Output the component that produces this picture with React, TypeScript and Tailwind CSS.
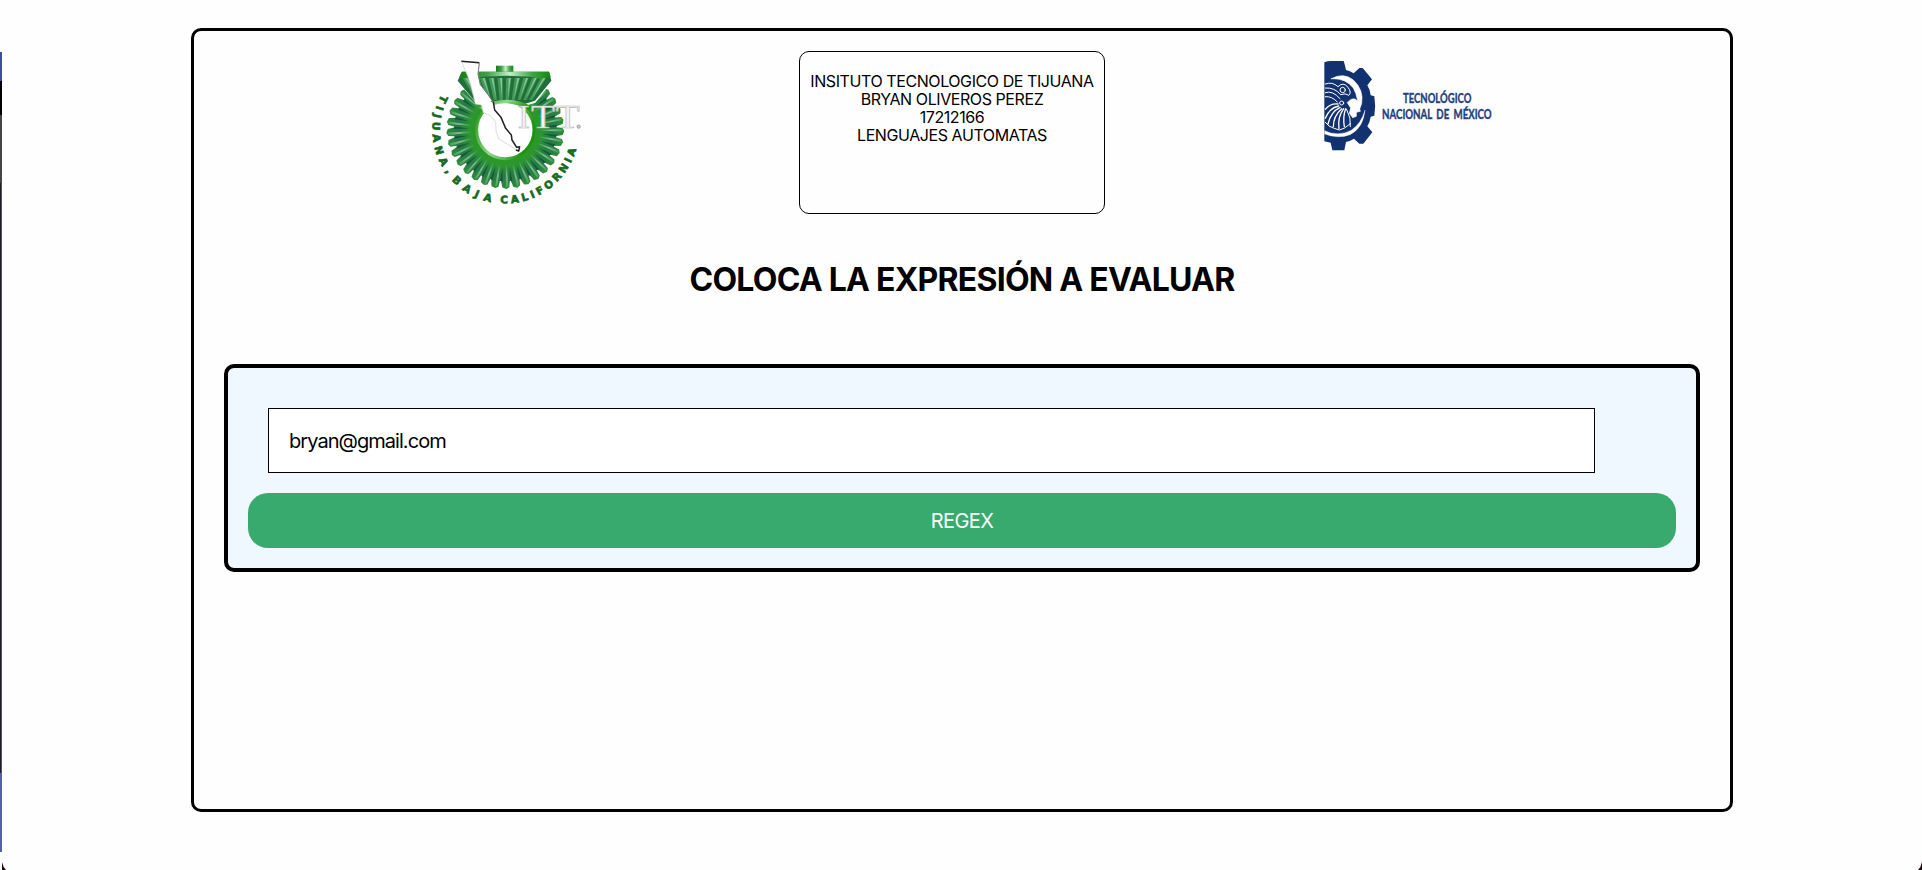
import React from "react";

const GEAR_CX = 256;
const GEAR_CY = 240;

function polar(r: number, deg: number) {
  const a = (deg * Math.PI) / 180;
  return `${(GEAR_CX + r * Math.cos(a)).toFixed(1)},${(GEAR_CY + r * Math.sin(a)).toFixed(1)}`;
}

function arc(r: number, from: number, to: number) {
  return `M${polar(r, from)} A${r},${r} 0 0 0 ${polar(r, to)}`;
}

const TEETH = Array.from({ length: 25 }, (_, i) => -42 + i * 11);
const BEVEL = [-118, -92, -66, -40, -14, 12, 38, 64, 90, 116];

function TijuanaLogo() {
  return (
    <svg className="block h-[160px] w-[170px]" viewBox="0 0 510 480" aria-hidden="true">
      <defs>
        <radialGradient id="body" gradientUnits="userSpaceOnUse" cx={GEAR_CX} cy={GEAR_CY} r="174">
          <stop offset="0.5" stopColor="#2a9a1c" />
          <stop offset="0.62" stopColor="#2c9436" />
          <stop offset="0.8" stopColor="#26794a" />
          <stop offset="1" stopColor="#2f8a3c" />
        </radialGradient>
        <radialGradient id="shine" gradientUnits="userSpaceOnUse" cx={GEAR_CX} cy={GEAR_CY} r="174">
          <stop offset="0.58" stopColor="#2e9a1f" />
          <stop offset="0.8" stopColor="#7dbd8c" />
          <stop offset="1" stopColor="#3f9c50" />
        </radialGradient>
        <linearGradient id="plate" x1="0" x2="1">
          <stop offset="0" stopColor="#15800f" />
          <stop offset="0.3" stopColor="#3f9e4a" />
          <stop offset="0.55" stopColor="#c4eec8" />
          <stop offset="0.8" stopColor="#3fa348" />
          <stop offset="1" stopColor="#128a0a" />
        </linearGradient>
        <linearGradient id="ring" x1="0" x2="1" y2="0.4">
          <stop offset="0" stopColor="#1f9310" />
          <stop offset="0.5" stopColor="#8fd890" />
          <stop offset="1" stopColor="#1f9310" />
        </linearGradient>
        <path id="arc1" d={arc(219, 209, 142)} />
        <path id="arc2" d={arc(221, 137, 100)} />
        <path id="arc3" d={arc(220, 94, 14)} />
      </defs>

      <circle cx={GEAR_CX} cy={GEAR_CY} r="120" fill="none" stroke="url(#body)" strokeWidth="68" />
      {TEETH.map((a) => (
        <g key={a}>
          <polygon
            points={`${polar(90, a - 5.5)} ${polar(154, a - 5)} ${polar(172, a - 4)} ${polar(177, a - 1)} ${polar(173, a + 3)} ${polar(152, a + 5)} ${polar(90, a + 5.5)}`}
            fill="url(#body)"
          />
          <polygon points={`${polar(104, a - 2.4)} ${polar(170, a - 3)} ${polar(173, a - 0.6)} ${polar(106, a - 0.6)}`} fill="url(#shine)" />
          <polygon points={`${polar(112, a + 4.2)} ${polar(156, a + 3.2)} ${polar(152, a + 6)}`} fill="#135a35" />
        </g>
      ))}
      <circle cx={GEAR_CX} cy={GEAR_CY} r="86" fill="#fefefe" stroke="url(#ring)" strokeWidth="9" />

      <path d="M108,96 L122,106 L168,160 L200,170 L314,168 L346,158 L386,108 L398,96 L393,60 L113,60 Z" fill="#fefefe" />
      <rect x="228" y="47" width="52" height="22" fill="url(#plate)" />
      <path d="M126,65 L387,65 L394,92 L345,152 L314,162 Q256,142 198,162 L166,156 L113,92 Z" fill="#1f7038" />
      {BEVEL.map((x) => (
        <path
          key={x}
          d={`M${254 + x - 8},84 L${254 + x + 8},84 L${254 + x * 0.68 + 4},150 L${254 + x * 0.68 - 5},150 Z`}
          fill="#43985a"
        />
      ))}
      {BEVEL.map((x) => (
        <path key={x} d={`M${254 + x},84 L${254 + x + 6},84 L${254 + x * 0.68 + 2},146 Z`} fill="#8ac695" />
      ))}
      <path d="M126,65 L387,65 L392,80 L360,86 L330,80 L256,77 L190,80 L150,86 L118,80 Z" fill="url(#plate)" />
      <path d="M176,172 Q256,128 336,170 L326,180 Q256,140 186,180 Z" fill="url(#ring)" />

      <path
        d="M125,35 L178,38 L174,72 L181,104 L204,134 L220,160 L224,180 L243,202 L257,235 L274,255 L276,272 L292,291 L299,290 L296,304 L274,290 L236,266 L228,243 L227,215 L208,195 L190,188 L184,165 L166,162 L152,104 L143,78 Z"
        fill="#fefefe"
        stroke="#cccccc"
        strokeWidth="2"
      />
      <path d="M178,40 L174,72 L181,104 L204,134 L220,156 L212,154" fill="none" stroke="#656565" strokeWidth="2.5" />
      <path
        d="M124,34 L178,38 M220,156 L224,180 L243,202 L257,235 L274,255 L276,270 L290,292 L299,290 L296,303 L288,300"
        fill="none"
        stroke="#222"
        strokeWidth="4.5"
        strokeLinejoin="round"
      />

      <g fontFamily="'Liberation Serif', serif" fontSize="99" fill="#f2f2f2" stroke="#b8b8b8" strokeWidth="1.8">
        <text x="293" y="235" textLength="36" lengthAdjust="spacingAndGlyphs">I</text>
        <text x="333" y="235" textLength="72" lengthAdjust="spacingAndGlyphs">T</text>
        <text x="407" y="235" textLength="72" lengthAdjust="spacingAndGlyphs">T</text>
      </g>
      <circle cx="476" cy="230" r="5" fill="#ccc" stroke="#888" strokeWidth="2" />

      <g fontFamily="'DejaVu Sans', sans-serif" fontWeight="700" fontSize="31" fill="#14691f" stroke="#14691f" strokeWidth="2">
        <text><textPath href="#arc1" textLength="253">TIJUANA,</textPath></text>
        <text><textPath href="#arc2" textLength="137">BAJA</textPath></text>
        <text><textPath href="#arc3" textLength="302">CALIFORNIA</textPath></text>
      </g>
    </svg>
  );
}

function TecnmLogo() {
  return (
    <svg className="block h-[110px] w-[200px] overflow-visible" viewBox="0 0 600 330" aria-hidden="true">
      <path
        d="M43,37 Q55,32 67,33 L101,33 Q105,45 108,60 Q120,62 131,70 L148,54 L158,54 L186,88 L172,106 Q180,118 182,136 L193,139 Q198,168 193,197 L182,200 Q180,216 172,229 L187,247 L160,281 L148,281 L132,266 Q121,273 108,276 L103,301 L67,301 L62,278 L43,274 Z"
        fill="#12316f"
      />
      <g fill="none" stroke="#fefefe" strokeLinecap="round" strokeLinejoin="round">
        <path d="M64,86 Q100,66 130,90 Q162,120 155,160 Q151,177 142,185 Q148,146 130,114 Q108,84 64,86 Z" fill="#fefefe" strokeWidth="2" />
        <path d="M46,102 Q66,94 84,110 Q100,94 114,112 Q126,128 116,136 Q106,128 92,134 Q74,112 46,114" strokeWidth="3" />
        <path d="M46,128 Q68,120 90,146 M46,140 Q66,138 82,156" strokeWidth="3" />
        <circle cx="98" cy="120" r="8" strokeWidth="3" />
        <circle cx="95" cy="159" r="6" strokeWidth="3" />
        <path d="M124,148 Q138,142 144,158 L151,184 L139,187 L139,199 L128,203 L118,190 L122,174 L112,158 Z" fill="#fefefe" strokeWidth="2" />
        <path d="M46,178 Q60,160 84,162 M46,205 Q58,174 86,168 M54,222 Q62,186 90,172 M70,230 Q70,198 95,176 M87,236 Q82,202 101,176 M103,230 Q98,200 107,176" strokeWidth="4" />
        <path d="M46,217 L57,228 L70,234 L88,240 L104,234 L122,220 M110,178 Q124,204 121,230" strokeWidth="3" />
        <path d="M44,242 Q84,262 125,240 Q154,220 165,180 Q160,234 120,254 Q82,268 44,252 Z" fill="#fefefe" strokeWidth="1" />
      </g>
      <g fontFamily="Lato, sans-serif" fontWeight="700" fill="#233f7c" stroke="#233f7c" strokeWidth="1.2">
        <text x="279" y="160" fontSize="41" textLength="205" lengthAdjust="spacingAndGlyphs">TECNOLÓGICO</text>
        <text x="216" y="208" fontSize="41" wordSpacing="8" textLength="329" lengthAdjust="spacingAndGlyphs">NACIONAL DE MÉXICO</text>
      </g>
    </svg>
  );
}

export default function App() {
  return (
    <div className="relative h-[870px] w-[1922px] overflow-hidden bg-[#fefefe] pt-7 pl-[191px] font-[Inter,sans-serif] text-black">
      <main className="h-[784px] w-[1542px] rounded-[10px] border-[3px] border-black">
        <header className="flex h-[183px] items-start pl-[226px]">
          <div className="mt-[19px]">
            <TijuanaLogo />
          </div>
          <div className="mt-5 ml-[209px] h-[163px] w-[306px] rounded-[10px] border border-black pt-5 text-center text-[16px] leading-[18px] tracking-[-0.42px] whitespace-nowrap">
            <p>INSITUTO TECNOLOGICO DE TIJUANA</p>
            <p>BRYAN OLIVEROS PEREZ</p>
            <p>17212166</p>
            <p>LENGUAJES AUTOMATAS</p>
          </div>
          <div className="mt-[19px] ml-[205px]">
            <TecnmLogo />
          </div>
        </header>
        <h1 className="mt-[46px] text-center text-[32px] leading-[40px] font-bold tracking-[-0.75px]">
          COLOCA LA EXPRESIÓN A EVALUAR
        </h1>
        <form
          className="mx-[30px] mt-[64px] h-[208px] rounded-[10px] border-4 border-black bg-[#eff7ff] px-5 pt-10"
          onSubmit={(e) => e.preventDefault()}
        >
          <input
            type="text"
            defaultValue="bryan@gmail.com"
            className="ml-5 block h-[65px] w-[1327px] border border-black bg-white px-5 text-[20px] tracking-[-0.95px] outline-none"
          />
          <button type="submit" className="mt-5 block h-[55px] w-full rounded-[20px] bg-[#39aa6d] pt-px text-[20px] tracking-[-0.6px] text-white">
            REGEX
          </button>
        </form>
      </main>
      <div className="absolute top-[52px] left-0 flex w-[2px] flex-col">
        <div className="h-[29px] bg-[#3e4fa3]" />
        <div className="h-[34px] bg-black" />
        <div className="h-[68px] bg-[#454545]" />
        <div className="h-[590px] border-r border-[#55565a] bg-[#1b1c26]" />
        <div className="h-[79px] bg-[#5561aa]" />
      </div>
      <svg className="absolute bottom-0 left-[2px] h-2 w-1" viewBox="0 0 4 8">
        <path d="M0,0 Q1,5 4,8 H0 Z" fill="#1c0a10" />
      </svg>
      <svg className="absolute right-0 bottom-0 h-2 w-1" viewBox="0 0 4 8">
        <path d="M4,0 Q3,5 0,8 H4 Z" fill="#1c0a10" />
      </svg>
    </div>
  );
}
